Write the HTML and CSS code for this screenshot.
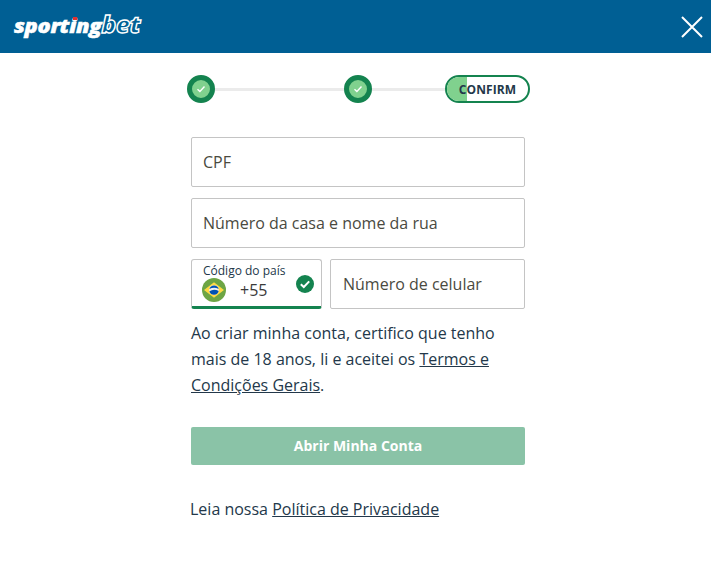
FILE: index.html
```html
<!DOCTYPE html>
<html lang="pt-BR">
<head>
    <meta charset="UTF-8">
    <title>Sportingbet</title>
    <link rel="stylesheet" href="styles.css">
</head>
<body>

<!-- Header -->
<header class="header">
    <div class="logo"><span class="logo-dark">sport<span class="logo-i">i<span class="logo-dot"></span></span>ng</span><span class="logo-bet">bet</span></div>
    <svg class="close-icon" width="22" height="22" viewBox="0 0 22 22">
        <path d="M1 1 L21 21 M21 1 L1 21" stroke="#fff" stroke-width="2" fill="none"/>
    </svg>
</header>

<!-- Stepper -->
<div class="stepper">
    <div class="step-done">
        <svg width="10" height="8" viewBox="0 0 10 8"><path d="M1.5 4.2 L3.9 6.4 L8.5 1.6" stroke="#fff" stroke-width="1.4" fill="none"/></svg>
    </div>
    <div class="step-line step-line-long"></div>
    <div class="step-done">
        <svg width="10" height="8" viewBox="0 0 10 8"><path d="M1.5 4.2 L3.9 6.4 L8.5 1.6" stroke="#fff" stroke-width="1.4" fill="none"/></svg>
    </div>
    <div class="step-line"></div>
    <div class="step-current"><span class="step-fill"></span><span class="step-label">CONFIRM</span></div>
</div>

<!-- Form -->
<div class="form">
    <div class="field">CPF</div>
    <div class="field">Número da casa e nome da rua</div>

    <div class="phone-row">
        <div class="country">
            <div class="country-label">Código do país</div>
            <div class="country-value">
                <svg class="flag" width="24" height="24" viewBox="0 0 24 24">
                    <circle cx="12" cy="12" r="12" fill="#6da544"/>
                    <path d="M12 4.2 L22 12 L12 19.8 L2 12 Z" fill="#ffda44"/>
                    <circle cx="12" cy="12" r="4.8" fill="#f0f0f0"/>
                    <path d="M7.4 11 A4.8 4.8 0 0 1 16.7 11 A10 10 0 0 0 7.4 11 Z" fill="#0052b4"/>
                    <path d="M7.4 13.2 A9 9 0 0 1 16.7 13 A4.8 4.8 0 0 1 7.4 13.2 Z" fill="#0052b4"/>
                </svg>
                <span class="dial-code">+55</span>
            </div>
            <svg class="country-check" width="18" height="18" viewBox="0 0 18 18">
                <circle cx="9" cy="9" r="9" fill="#14834f"/>
                <path d="M4.8 9.2 L7.8 12 L13.2 6.4" stroke="#fff" stroke-width="2" fill="none"/>
            </svg>
        </div>
        <div class="field phone">Número de celular</div>
    </div>

    <p class="terms">Ao criar minha conta, certifico que tenho mais de 18 anos, li e aceitei os <a href="#">Termos e Condições Gerais</a>.</p>

    <button class="submit"><span class="submit-label">Abrir Minha Conta</span></button>

    <p class="privacy">Leia nossa <a href="#">Política de Privacidade</a></p>
</div>

</body>
</html>
```

FILE: styles.css
```css
body {
    margin: 0;
    background: #fff;
    color: #23384a;
    font-family: 'Open Sans', 'Noto Sans', sans-serif;
}

/* Header */
.header {
    height: 53px;
    background: #005f94;
    display: flex;
    align-items: center;
    justify-content: space-between;
    padding: 0 8px 0 14px;
}

.logo {
    font-family: 'Open Sans', sans-serif;
    font-size: 20px;
    font-weight: 800;
    font-style: italic;
    letter-spacing: -0.3px;
    color: #fff;
    -webkit-text-stroke: 0.5px #fff;
    margin-top: -5px;
    transform: scaleX(1.09);
    transform-origin: left center;
}

.logo-i {
    position: relative;
}

.logo-dot {
    position: absolute;
    top: 5px;
    left: 3px;
    width: 4px;
    height: 3px;
    background: #e03131;
}

.logo-bet {
    color: #005f94;
    -webkit-text-stroke: 1.3px #fff;
    font-size: 22px;
    letter-spacing: 0;
}

.close-icon {
    display: block;
}

/* Stepper */
.stepper {
    width: 343px;
    margin: 22px 0 0 187px;
    display: flex;
    align-items: center;
}

.step-done {
    width: 18px;
    height: 18px;
    flex: none;
    border: 5px solid #14834f;
    border-radius: 50%;
    background: #80d18e;
    display: flex;
    align-items: center;
    justify-content: center;
}

.step-line {
    width: 73px;
    flex: none;
    height: 3px;
    background: #ebebeb;
}

.step-line-long {
    width: 129px;
}

.step-current {
    position: relative;
    width: 81px;
    height: 24px;
    flex: none;
    border: 2px solid #14834f;
    border-radius: 14px;
    overflow: hidden;
    display: flex;
    align-items: center;
    justify-content: center;
}

.step-fill {
    position: absolute;
    left: 0;
    top: 0;
    bottom: 0;
    width: 20px;
    background: #80d18e;
}

.step-label {
    position: relative;
    font-size: 12px;
    font-weight: 700;
    letter-spacing: 0.1px;
}

/* Form */
.form {
    width: 334px;
    margin: 34px 0 0 191px;
}

.field {
    height: 48px;
    border: 1px solid #c4c4c4;
    border-radius: 2px;
    padding: 0 11px;
    margin-bottom: 11px;
    display: flex;
    align-items: center;
    font-size: 16px;
    color: #4a4a3f;
    width: 310px;
}

.phone-row {
    display: flex;
    gap: 8px;
}

.country {
    position: relative;
    width: 129px;
    height: 46px;
    flex: none;
    border: 1px solid #c4c4c4;
    border-bottom: 3px solid #14834f;
    border-radius: 3px;
}

.country-label {
    font-size: 12px;
    line-height: 14px;
    margin: 4px 0 0 11px;
}

.country-value {
    display: flex;
    align-items: center;
    margin: 0 0 0 10px;
}

.flag {
    display: block;
}

.dial-code {
    font-size: 16px;
    margin-left: 14px;
    color: #3a3a3a;
}

.country-check {
    position: absolute;
    right: 7px;
    top: 15px;
}

.phone {
    width: auto;
    flex: 1;
    margin-bottom: 0;
    padding: 0 12px;
}

.terms {
    margin: 11px 0 0;
    font-size: 16px;
    line-height: 26px;
}

a {
    color: inherit;
}

.submit {
    display: block;
    width: 100%;
    height: 38px;
    margin-top: 29px;
    padding: 0 0 2px;
    border: none;
    border-radius: 2px;
    background: #8ac3a7;
    color: #fff;
    font-family: inherit;
    font-size: 14px;
    font-weight: 700;
}

.privacy {
    margin: 32px 0 0 -1px;
    font-size: 16px;
    line-height: 24px;
}
```
